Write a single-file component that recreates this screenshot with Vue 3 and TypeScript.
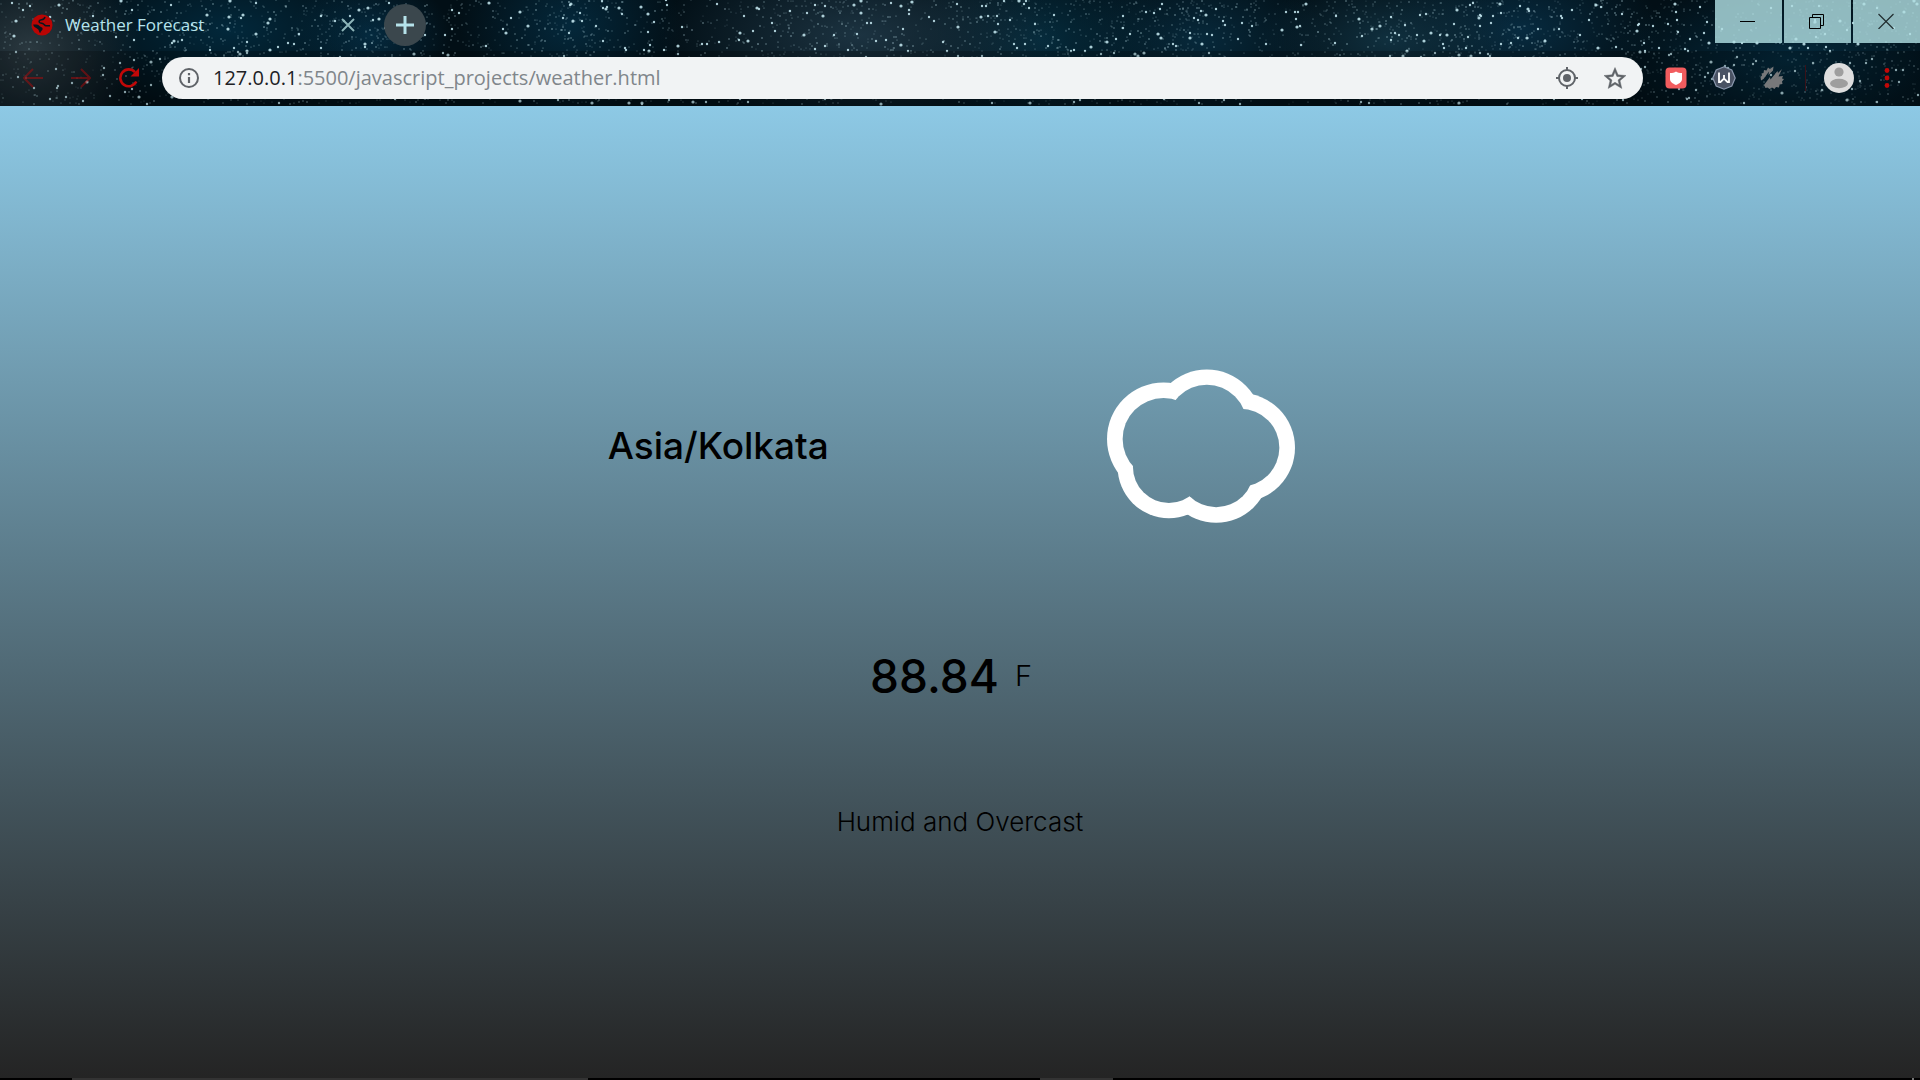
<script setup lang="ts">
interface Star {
  x: number
  y: number
  r: number
  o: number
}

function createRandom(seed: number): () => number {
  let s = seed
  return () => {
    s = (s * 1664525 + 1013904223) % 4294967296
    return s / 4294967296
  }
}

const rand = createRandom(77)
const clusters = [240, 380, 570, 830, 1040, 1180, 1390, 1500, 1640, 1850]
const stars: Star[] = []
for (let i = 0; i < 5200; i++) {
  const k = rand()
  const centre = clusters[Math.floor(rand() * clusters.length)]
  const spread = (rand() + rand() - 1) * 90
  const x = i % 3 === 0 ? centre + spread : rand() * 1920
  stars.push({
    x: Math.round(x),
    y: Math.round(rand() * 104),
    r: k > 0.97 ? 1.6 : k > 0.88 ? 1.2 : k > 0.5 ? 0.8 : 0.6,
    o: k > 0.88 ? 0.85 : 0.2 + rand() * 0.45,
  })
}

const lobes = [
  { x: 222, y: 266, outer: 170, inner: 123 },
  { x: 352, y: 223, outer: 166, inner: 120 },
  { x: 453, y: 292, outer: 164, inner: 117 },
  { x: 380, y: 358, outer: 160, inner: 113 },
  { x: 238, y: 350, outer: 154, inner: 108 },
]

const timezone = 'Asia/Kolkata'
const temperature = '88.84'
const unit = 'F'
const summary = 'Humid and Overcast'
</script>

<template>
  <div class="browser">
    <header class="chrome">
      <svg class="stars" viewBox="0 0 1920 106" preserveAspectRatio="xMidYMid slice" aria-hidden="true">
        <circle v-for="(s, i) in stars" :key="i" :cx="s.x" :cy="s.y" :r="s.r" :opacity="s.o" fill="#c8ebf3" />
      </svg>

      <div class="tab-strip">
        <div class="tab">
          <svg class="favicon" viewBox="0 0 22 22" aria-hidden="true">
            <circle cx="11" cy="11" r="10.5" fill="#b90504" />
            <path d="M14 3c-.5 2-2 2.500-3.500 2.700C8.500 6 7.500 7.200 8.500 8.500c1 1 2.500.5 3.800 1.300 1.200.8 1.200 2 2.700 2h4" fill="none" stroke="#07161f" stroke-width="1.500" />
            <path d="M2.200 10.500h3.300c2 0 2.500 1.500 4 2.200 1.500.6 2.500 1.300 2 2.800-.4 1.200-1.800 1.500-2.200 3.500-1.500-.4-1-2.300-2-3.500C6 13.800 2.500 13.500 2.200 10.500z" fill="#07161f" />
          </svg>
          <span class="tab-title">Weather Forecast</span>
          <button class="tab-close" aria-label="Close tab">
            <svg viewBox="0 0 14 14"><path d="M1 1l12 12M13 1L1 13" stroke="#8db4b8" stroke-width="2" /></svg>
          </button>
        </div>
        <button class="new-tab" aria-label="New tab">
          <svg viewBox="0 0 18 18"><path d="M9 0v18M0 9h18" stroke="#b5e2ea" stroke-width="3" /></svg>
        </button>
        <div class="window-controls">
          <button aria-label="Minimize"><svg viewBox="0 0 16 16"><path d="M0 8.500h15" stroke="#000" /></svg></button>
          <button aria-label="Restore"><svg viewBox="0 0 16 16"><path d="M.5 4.500h11v11H.5zM3.500 4V1.500h11v11H12" fill="none" stroke="#000" /></svg></button>
          <button aria-label="Close"><svg viewBox="0 0 16 16"><path d="M.5 1l15 15M15.500 1l-15 15" stroke="#222e30" stroke-width="1.200" /></svg></button>
        </div>
      </div>

      <div class="toolbar">
        <nav class="nav">
          <button class="dim" aria-label="Back"><svg viewBox="0 0 20 20"><path d="M20 10H1.500M10 1L1 10l9 9" /></svg></button>
          <button class="dim" aria-label="Forward"><svg viewBox="0 0 20 20"><path d="M0 10h18.500M10 1l9 9-9 9" /></svg></button>
          <button aria-label="Reload">
            <svg viewBox="0 0 20 20"><path d="M17.300 13.500A8.400 8.400 0 1 1 16 4.200" stroke-width="2.600" /><path d="M20 0v8.500h-8.500z" fill="#c00808" stroke="none" /></svg>
          </button>
        </nav>

        <div class="omnibox">
          <button class="info" aria-label="Site information">
            <svg viewBox="0 0 20 20"><circle cx="10" cy="10" r="9" fill="none" stroke="#5f6368" stroke-width="2" /><path d="M10 9v6M10 5v2.200" stroke="#5f6368" stroke-width="2.200" /></svg>
          </button>
          <p class="url"><span class="host">127.0.0.1</span>:5500/javascript_projects/weather.html</p>
          <button class="locate" aria-label="Location">
            <svg viewBox="0 0 22 22"><circle cx="11" cy="11" r="8" fill="none" stroke="#5f6368" stroke-width="2" /><circle cx="11" cy="11" r="4" fill="#5f6368" /><path d="M11 0v3M11 19v3M0 11h3M19 11h3" stroke="#5f6368" stroke-width="2" /></svg>
          </button>
          <button class="bookmark" aria-label="Bookmark">
            <svg viewBox="2 2 20 19"><path d="M22 9.240l-7.190-.62L12 2 9.190 8.630 2 9.240l5.460 4.730L5.820 21 12 17.270 18.180 21l-1.630-7.030L22 9.240zM12 15.400l-3.760 2.270 1-4.280-3.320-2.880 4.380-.38L12 6.100l1.710 4.040 4.380.38-3.320 2.880 1 4.280L12 15.400z" fill="#5f6368" stroke="#5f6368" stroke-width=".4" /></svg>
          </button>
        </div>

        <div class="extensions">
          <button class="ext" aria-label="Shield">
            <svg viewBox="0 0 24 24"><rect x="1.500" y="1.500" width="21" height="21" rx="4" fill="#f25c5e" /><path d="M6 7c2.500 0 4.500-.5 6-1.500C13.500 6.500 15.500 7 18 7v6c0 3-2.500 4.500-6 6-3.500-1.500-6-3-6-6z" fill="#fff" /></svg>
          </button>
          <button class="ext" aria-label="W extension">
            <svg viewBox="0 0 24 24"><path d="M12 .8l7.800 3.200L23.200 12l-3.400 8L12 23.200 4.200 20 .8 12l3.400-8z" fill="#4a5364" stroke="#8b98ae" stroke-width="1.200" /><path d="M7 6.500v9.500h1.500l3.500-3.500 3.500 3.500H17V6.500M12 12.500V9" fill="none" stroke="#fff" stroke-width="1.800" /></svg>
          </button>
          <button class="ext" aria-label="Leaf extension">
            <svg viewBox="0 0 24 24">
              <path d="M1 14.500L.5 11 2 9.500 1.500 7.500l2-.5.5-3 2.500.5L8 1.500l2 1.500L13.500.5l-.5 4-4.500 4.500.5-3.500-5.500 7.500zM4 19l6-8 .5 2.500 7-8.500.5 2 4-4-3.500 7.500 4.500-.5-1 2.500 2 .5-2 2.500.5 2.500-3 .5-.5 3-3-.5-1.500 2-2.500-1.500-2.500 1.500-2-1.500-2 .5z" fill="#77787a" />
            </svg>
          </button>
        </div>
        <span class="divider"></span>
        <button class="avatar" aria-label="Profile">
          <svg viewBox="0 0 30 30"><circle cx="15" cy="15" r="15" fill="#dedede" /><circle cx="15" cy="9" r="4.600" fill="#9e9e9e" /><ellipse cx="15" cy="20.500" rx="9" ry="4.700" fill="#9e9e9e" /></svg>
        </button>
        <button class="menu" aria-label="Menu">
          <svg viewBox="0 0 6 20"><circle cx="3" cy="2.500" r="2.400" /><circle cx="3" cy="10" r="2.400" /><circle cx="3" cy="17.500" r="2.400" /></svg>
        </button>
      </div>
    </header>

    <main class="weather">
      <section class="location">
        <h1 class="timezone">{{ timezone }}</h1>
        <div class="icon-box">
          <svg class="cloud" viewBox="52 56 565 462" role="img" aria-label="Cloudy">
            <mask id="cloud-mask" maskUnits="userSpaceOnUse" x="40" y="40" width="600" height="500">
              <circle v-for="(l, i) in lobes" :key="'o' + i" :cx="l.x" :cy="l.y" :r="l.outer" fill="#fff" />
              <circle v-for="(l, i) in lobes" :key="'i' + i" :cx="l.x" :cy="l.y" :r="l.inner" fill="#000" />
            </mask>
            <rect x="40" y="40" width="600" height="500" fill="#fff" mask="url(#cloud-mask)" />
          </svg>
        </div>
      </section>
      <section class="temperature">
        <h2 class="degree">{{ temperature }}</h2>
        <span class="unit">{{ unit }}</span>
      </section>
      <p class="summary">{{ summary }}</p>
    </main>

    <footer class="taskbar">
      <span class="search"></span>
      <span class="active-app"></span>
      <span class="show-desktop"></span>
    </footer>
  </div>
</template>

<style>
body {
  margin: 0;
}
</style>

<style scoped>
.browser {
  display: flex;
  flex-direction: column;
  min-height: 100vh;
}

button {
  display: flex;
  align-items: center;
  justify-content: center;
  flex: none;
  margin: 0;
  padding: 0;
  border: 0;
  background: none;
}

svg {
  display: block;
  flex: none;
}

.chrome {
  position: relative;
  overflow: hidden;
  background:
    radial-gradient(ellipse 110px 100px at 30px 50px, #2b3940 0%, transparent 100%),
    radial-gradient(ellipse 170px 80px at 230px 30px, #02283b 0%, transparent 100%),
    radial-gradient(ellipse 80px 60px at 370px 35px, #052a3f 0%, transparent 100%),
    radial-gradient(ellipse 110px 90px at 570px 25px, #04283b 0%, transparent 100%),
    radial-gradient(ellipse 200px 90px at 860px 35px, #1c3341 0%, transparent 100%),
    radial-gradient(ellipse 130px 90px at 1040px 40px, #052b3c 0%, transparent 100%),
    radial-gradient(ellipse 130px 80px at 1200px 40px, #07293b 0%, transparent 100%),
    radial-gradient(ellipse 130px 70px at 1390px 40px, #10303f 0%, transparent 100%),
    radial-gradient(ellipse 140px 80px at 1520px 30px, #072b40 0%, transparent 100%),
    radial-gradient(ellipse 180px 80px at 1790px 60px, #04293c 0%, transparent 100%),
    #020f16;
}

.stars {
  position: absolute;
  top: 0;
  left: 0;
  width: 100%;
  height: 100%;
}

.tab-strip {
  position: relative;
  display: flex;
  height: 51px;
}

.tab {
  display: flex;
  align-items: center;
  box-sizing: border-box;
  width: 384px;
  height: 50px;
  padding: 0 29px 0 31px;
}

.favicon {
  width: 22px;
  height: 22px;
}

.tab-title {
  flex: 1;
  margin-left: 12px;
  color: #b5e4ed;
  font: 17px/24px "Open Sans", "Noto Sans", sans-serif;
}

.tab-close svg {
  width: 14px;
  height: 14px;
}

.new-tab {
  width: 42px;
  height: 42px;
  margin-top: 4px;
  border-radius: 50%;
  background: #3b474d;
}

.new-tab svg {
  width: 18px;
  height: 18px;
}

.window-controls {
  display: flex;
  gap: 2px;
  margin-left: auto;
}

.window-controls button {
  box-sizing: border-box;
  width: 67px;
  height: 43px;
  padding: 0 1px 2px 0;
  background: rgba(176, 222, 226, 0.82);
}

.window-controls svg {
  width: 16px;
  height: 16px;
}

.toolbar {
  position: relative;
  display: flex;
  align-items: center;
  box-sizing: border-box;
  height: 55px;
  padding: 0 30px 1px 23px;
  background: rgba(0, 0, 0, 0.2);
}

.nav {
  display: flex;
  gap: 28px;
  width: 139px;
}

.nav svg {
  width: 20px;
  height: 20px;
  fill: none;
  stroke: #c00808;
  stroke-width: 2;
}

.dim {
  opacity: 0.45;
}

.omnibox {
  display: flex;
  align-items: center;
  flex: 1;
  box-sizing: border-box;
  height: 42px;
  padding: 0 17px;
  border-radius: 21px;
  background: #f1f3f4;
}

.info svg {
  width: 20px;
  height: 20px;
}

.bookmark svg {
  width: 22px;
  height: 22px;
}

.url {
  flex: 1;
  margin: 0 0 0 14px;
  color: #80868b;
  font: 20px/28px "Open Sans", "Noto Sans", sans-serif;
}

.host {
  color: #202124;
}

.locate {
  margin-right: 26px;
}

.locate svg {
  width: 22px;
  height: 22px;
}

.extensions {
  display: flex;
  align-items: center;
  gap: 24px;
  margin-left: 21px;
}

.ext svg {
  width: 24px;
  height: 24px;
}

.divider {
  width: 1px;
  height: 26px;
  margin: 0 18px 0 21px;
  background: #3a1219;
}

.avatar svg {
  width: 30px;
  height: 30px;
}

.menu {
  margin-left: 30px;
}

.menu svg {
  width: 6px;
  height: 20px;
  fill: #c00808;
}

.weather {
  display: flex;
  flex: 1;
  flex-direction: column;
  align-items: center;
  box-sizing: border-box;
  padding-top: 18vh;
  background: linear-gradient(#8dc9e5, #242424);
  color: #000;
  font-family: Inter, sans-serif;
}

.location {
  display: flex;
  align-items: center;
  justify-content: space-around;
  width: 50%;
  height: 27vh;
}

.timezone {
  margin: 0;
  font-size: 37px;
  font-weight: 500;
  line-height: 44px;
}

.icon-box {
  display: flex;
  justify-content: flex-end;
  box-sizing: border-box;
  width: 228px;
  padding-right: 17px;
}

.cloud {
  width: 188px;
  height: 154px;
}

.temperature {
  display: flex;
  align-items: center;
  gap: 16px;
  height: 168px;
  margin-right: 18px;
}

.degree {
  margin: 0;
  font-size: 46px;
  font-weight: 500;
  line-height: 56px;
}

.unit {
  font-size: 29px;
  font-weight: 300;
  line-height: 36px;
}

.summary {
  margin: 0;
  font-size: 26px;
  font-weight: 300;
  line-height: 124px;
}

.taskbar {
  display: flex;
  height: 2px;
  padding: 0 6px 0 72px;
  background: #000;
}

.search {
  width: 516px;
  background: #333;
}

.active-app {
  width: 73px;
  margin-left: 452px;
  background: #333;
}

.show-desktop {
  width: 2px;
  margin-left: auto;
  background: #777;
}
</style>
